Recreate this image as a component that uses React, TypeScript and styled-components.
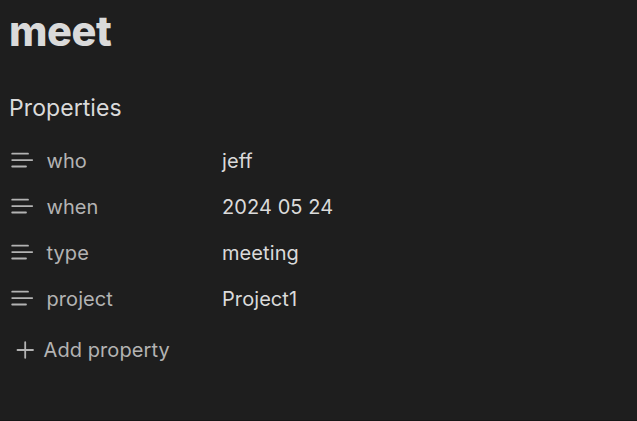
import React from "react";
import styled, { createGlobalStyle } from "styled-components";

const GlobalStyle = createGlobalStyle`
  body { margin: 0; background: #1e1e1e; }
`;
const Note = styled.main`
  box-sizing: border-box;
  height: 421px;
  padding: 6px 9px 0;
  background: #1e1e1e;
  border-bottom: 1px solid #161616;
  color: #dadada;
  font-family: Inter, sans-serif;
  font-size: 20px;
  letter-spacing: 0.08px;
  overflow: hidden;
`;
const Title = styled.h1`
  margin: 0;
  font-size: 41.5px;
  line-height: 50px;
  font-weight: 800;
  letter-spacing: -0.45px;
`;
const Heading = styled.h2`
  margin: 37px 0 0;
  font-size: 23px;
  line-height: 30px;
  font-weight: 400;
`;
const List = styled.dl`
  margin: 15px 0 0;
`;
const Row = styled.div`
  display: grid;
  grid-template-columns: 37.5px 175.5px 1fr;
  align-items: center;
  height: 46px;
`;
const Name = styled.dt`
  color: #b3b3b3;
`;
const Value = styled.dd`
  margin: 0;
`;
const Icon = styled.svg`
  display: block;
  width: 26px;
  height: 26px;
  fill: none;
  stroke: #b3b3b3;
  stroke-width: 1.8;
  stroke-linecap: round;
`;
const AddButton = styled.button`
  display: flex;
  align-items: center;
  gap: 5.5px;
  height: 40px;
  margin: 8px 0 0 3px;
  padding: 0;
  border: 0;
  background: none;
  color: #b3b3b3;
  font: inherit;
  letter-spacing: inherit;
`;

const properties = [
  ["who", "jeff"],
  ["when", "2024 05 24"],
  ["type", "meeting"],
  ["project", "Project1"],
];

export default function App() {
  return (
    <Note>
      <GlobalStyle />
      <Title>meet</Title>
      <Heading>Properties</Heading>
      <List>
        {properties.map(([name, value]) => (
          <Row key={name}>
            <Icon viewBox="0 0 26 26">
              <path d="M3.2 5.7H19M3.2 12.1H23.2M3.2 18.5H17" />
            </Icon>
            <Name>{name}</Name>
            <Value>{value}</Value>
          </Row>
        ))}
      </List>
      <AddButton>
        <Icon viewBox="0 0 26 26">
          <path d="M5.5 13H21M13.2 5.2V20.8" />
        </Icon>
        Add property
      </AddButton>
    </Note>
  );
}
